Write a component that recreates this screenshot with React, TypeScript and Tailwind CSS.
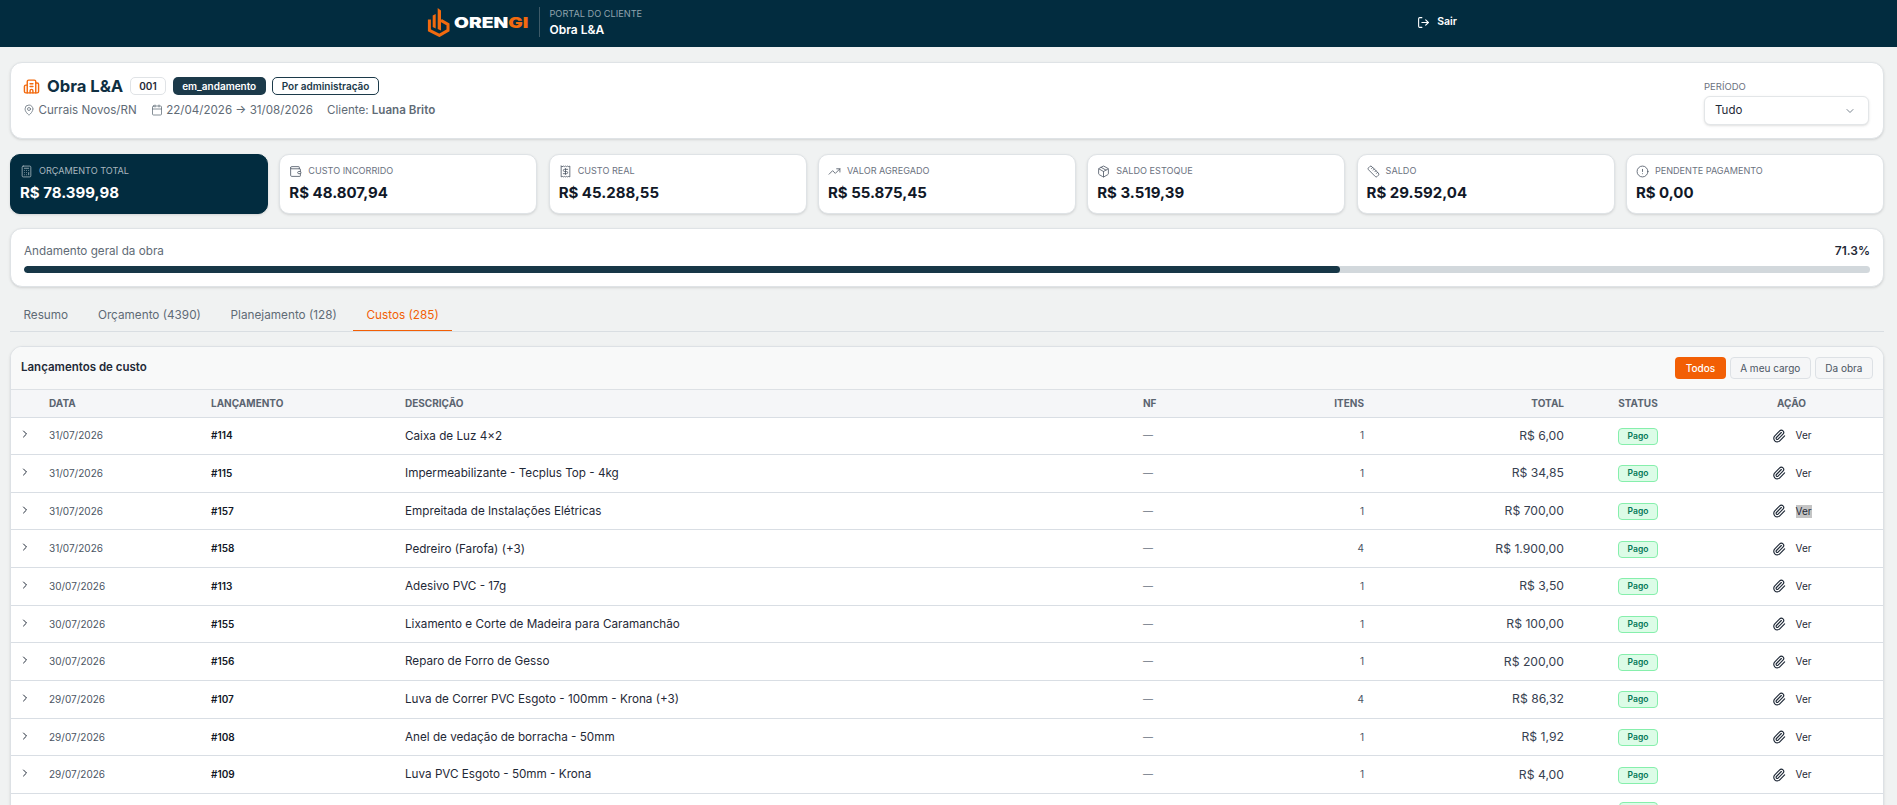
import {
  Building2,
  Calculator,
  Calendar,
  ChevronDown,
  ChevronRight,
  CircleAlert,
  LogOut,
  MapPin,
  Package,
  Paperclip,
  Receipt,
  Ruler,
  TrendingUp,
  Wallet,
} from 'lucide-react'
import type { LucideIcon } from 'lucide-react'

interface Kpi {
  label: string
  value: string
  icon: LucideIcon
  dark?: boolean
}

const KPIS: Kpi[] = [
  { label: 'Orçamento total', value: 'R$ 78.399,98', icon: Calculator, dark: true },
  { label: 'Custo incorrido', value: 'R$ 48.807,94', icon: Wallet },
  { label: 'Custo real', value: 'R$ 45.288,55', icon: Receipt },
  { label: 'Valor agregado', value: 'R$ 55.875,45', icon: TrendingUp },
  { label: 'Saldo estoque', value: 'R$ 3.519,39', icon: Package },
  { label: 'Saldo', value: 'R$ 29.592,04', icon: Ruler },
  { label: 'Pendente pagamento', value: 'R$ 0,00', icon: CircleAlert },
]

const TABS = ['Resumo', 'Orçamento (4390)', 'Planejamento (128)', 'Custos (285)']

const ROWS = [
  { date: '31/07/2026', id: '#114', desc: 'Caixa de Luz 4×2', items: 1, total: 'R$ 6,00' },
  { date: '31/07/2026', id: '#115', desc: 'Impermeabilizante - Tecplus Top - 4kg', items: 1, total: 'R$ 34,85' },
  { date: '31/07/2026', id: '#157', desc: 'Empreitada de Instalações Elétricas', items: 1, total: 'R$ 700,00' },
  { date: '31/07/2026', id: '#158', desc: 'Pedreiro (Farofa) (+3)', items: 4, total: 'R$ 1.900,00' },
  { date: '30/07/2026', id: '#113', desc: 'Adesivo PVC - 17g', items: 1, total: 'R$ 3,50' },
  { date: '30/07/2026', id: '#155', desc: 'Lixamento e Corte de Madeira para Caramanchão', items: 1, total: 'R$ 100,00' },
  { date: '30/07/2026', id: '#156', desc: 'Reparo de Forro de Gesso', items: 1, total: 'R$ 200,00' },
  { date: '29/07/2026', id: '#107', desc: 'Luva de Correr PVC Esgoto - 100mm - Krona (+3)', items: 4, total: 'R$ 86,32' },
  { date: '29/07/2026', id: '#108', desc: 'Anel de vedação de borracha - 50mm', items: 1, total: 'R$ 1,92' },
  { date: '29/07/2026', id: '#109', desc: 'Luva PVC Esgoto - 50mm - Krona', items: 1, total: 'R$ 4,00' },
]

function Logo() {
  return (
    <div className="flex items-center">
      <svg width="23" height="30" viewBox="0 0 23 30" fill="none" className="shrink-0">
        <path d="M2.4 12.5 V23.4 L12.4 28.4 L21 23.4 V17.4 L14 13.4" stroke="#f26a0f" strokeWidth="3" />
        <path d="M5.7 8.5 L8.7 7 V21.5 L5.7 20 Z" fill="#f26a0f" />
        <path d="M10.7 1 L14 3.4 V23.5 L10.7 22 Z" fill="#f26a0f" />
      </svg>
      <div className="ml-[4px] w-[76px]">
        <span className="block origin-left scale-x-[1.28] text-[15px] font-black leading-none text-white">
          OREN<span className="text-[#f26a0f]">GI</span>
        </span>
      </div>
    </div>
  )
}

function KpiCard({ label, value, icon: Icon, dark }: Kpi) {
  return (
    <div className={`h-[60px] rounded-[10px] border px-[9px] pt-[9px] shadow-sm ${dark ? 'border-[#022c3f] bg-[#022c3f]' : 'border-[#dfe3e6] bg-white'}`}>
      <div className={`flex items-center gap-[6px] text-[9.1px] uppercase leading-[14px] ${dark ? 'text-[#a9b7bf]' : 'text-[#6b7280]'}`}>
        <Icon size={13} strokeWidth={1.5} className={dark ? '' : 'text-[#4b5563]'} />
        <span>{label}</span>
      </div>
      <div className={`mt-[5px] text-[15px] font-bold leading-[20px] ${dark ? 'text-white' : 'text-[#111827]'}`}>{value}</div>
    </div>
  )
}

export default function App() {
  return (
    <div className="h-screen overflow-hidden bg-[#f0f2f2] font-['Inter',sans-serif] text-[#111827]">
      <header className="h-[47px] bg-[#022c3f] pr-[13px]">
        <div className="mx-auto flex h-full w-[1030px] items-center justify-between pb-[3px]">
          <div className="flex items-center">
            <Logo />
            <div className="ml-[9px] h-[30px] border-l border-[#3d5a68] pl-[9.5px]">
              <div className="text-[9.2px] uppercase leading-[13px] text-[#8fa3ad]">Portal do Cliente</div>
              <div className="mt-[2px] text-[12px] font-semibold leading-[15px] text-white">Obra L&amp;A</div>
            </div>
          </div>
          <div className="flex items-center gap-[7px] text-[10.5px] font-semibold text-white">
            <LogOut size={13} />
            <span>Sair</span>
          </div>
        </div>
      </header>

      <main className="pl-[10px] pr-[13px]">
        <section className="mt-[15px] flex h-[77px] justify-between rounded-xl border border-[#dfe3e6] bg-white pl-[12px] pr-[14px] shadow-sm">
          <div className="pt-[13px]">
            <div className="flex items-center">
              <Building2 size={17} strokeWidth={2} className="text-[#f26a0f]" />
              <h1 className="ml-[7px] text-[16.6px] font-bold leading-[20px] text-[#0f2f42]">Obra L&amp;A</h1>
              <span className="ml-[7px] flex h-[18.5px] items-center rounded-[5px] border border-[#e0e3e6] px-[8px] text-[10px] font-semibold text-[#1f2937]">001</span>
              <span className="ml-[7px] flex h-[18.5px] items-center rounded-[5px] bg-[#1c3a4a] px-[9.5px] text-[10px] font-semibold text-white">em_andamento</span>
              <span className="ml-[6px] flex h-[18.5px] items-center rounded-[5px] border border-[#1c3a4a] px-[9px] text-[10px] font-semibold text-[#1c3a4a]">Por administração</span>
            </div>
            <div className="mt-[5px] flex items-center text-[11.6px] leading-[18px] text-[#5f6b76]">
              <MapPin size={12} strokeWidth={1.5} />
              <span className="ml-[3.5px]">Currais Novos/RN</span>
              <Calendar size={12} strokeWidth={1.5} className="ml-[14px]" />
              <span className="ml-[3.5px]">22/04/2026 → 31/08/2026</span>
              <span className="ml-[14px]">
                Cliente: <strong className="font-semibold">Luana Brito</strong>
              </span>
            </div>
          </div>
          <div className="w-[165px] pt-[17px]">
            <div className="text-[9.5px] uppercase leading-[14px] text-[#6b7280]">Período</div>
            <div className="mt-[2px] flex h-[29px] items-center justify-between rounded-[6px] border border-[#e3e6e8] bg-white pl-[10px] pr-[12px] text-[11.5px] text-[#1f2937] shadow-sm">
              <span>Tudo</span>
              <ChevronDown size={12} className="text-[#7a8590]" />
            </div>
          </div>
        </section>

        <section className="mt-[15px] grid grid-cols-7 gap-[11.2px]">
          {KPIS.map((kpi) => (
            <KpiCard key={kpi.label} {...kpi} />
          ))}
        </section>

        <section className="mt-[14px] h-[59px] rounded-xl border border-[#dfe3e6] bg-white px-[13px] pt-[14px] shadow-sm">
          <div className="flex items-center justify-between text-[11.7px] leading-[16px]">
            <span className="text-[#5f6b76]">Andamento geral da obra</span>
            <span className="text-[12px] font-semibold text-[#1f2937]">71.3%</span>
          </div>
          <div className="mt-[7px] h-[7px] overflow-hidden rounded-full bg-[#d2d8dc]">
            <div className="h-full rounded-full bg-[#173747]" style={{ width: '71.3%' }} />
          </div>
        </section>

        <nav className="mt-[13px] flex h-[32px] gap-[3px] border-b border-[#d9dee2] text-[11.75px] text-[#5f6b76]">
          {TABS.map((tab) => {
            const active = tab.startsWith('Custos')
            return (
              <div key={tab} className={`h-[31px] px-[13.4px] pt-[6px] leading-[18px] ${active ? 'border-b border-[#f25f05] text-[#f25f05]' : ''}`}>
                {tab}
              </div>
            )
          })}
        </nav>

        <section className="mt-[14px] overflow-hidden rounded-t-xl border border-[#dde1e5] bg-white shadow-sm">
          <div className="flex h-[43px] items-center justify-between border-b border-[#dde1e5] bg-[#f8f9f9] pl-[10px] pr-[10px]">
            <h2 className="text-[11.5px] font-semibold text-[#1f2937]">Lançamentos de custo</h2>
            <div className="flex gap-[4px] text-[10px]">
              <button className="h-[21.5px] rounded-[4px] bg-[#f25f05] px-[10.5px] font-medium text-white">Todos</button>
              <button className="h-[21.5px] rounded-[4px] border border-[#dde1e5] bg-[#f5f6f7] px-[9.5px] text-[#4b5563]">A meu cargo</button>
              <button className="h-[21.5px] rounded-[4px] border border-[#dde1e5] bg-[#f5f6f7] px-[9.5px] text-[#4b5563]">Da obra</button>
            </div>
          </div>
          <table className="w-full table-fixed border-collapse text-[11px]">
            <colgroup>
              <col className="w-[26px]" />
              <col className="w-[162px]" />
              <col className="w-[194px]" />
              <col className="w-[738px]" />
              <col className="w-[119px]" />
              <col className="w-[126px]" />
              <col className="w-[200px]" />
              <col className="w-[124px]" />
              <col />
            </colgroup>
            <thead>
              <tr className="h-[27px] border-b border-[#d9dee4] bg-[#f5f6f8] text-[10px] uppercase text-[#5b6470]">
                <th />
                <th className="px-3 text-left font-bold">Data</th>
                <th className="px-3 text-left font-bold">Lançamento</th>
                <th className="px-3 text-left font-bold">Descrição</th>
                <th className="px-3 text-left font-bold">NF</th>
                <th className="px-3 text-right font-bold">Itens</th>
                <th className="px-3 text-right font-bold">Total</th>
                <th className="text-center font-bold">Status</th>
                <th className="text-center font-bold">Ação</th>
              </tr>
            </thead>
            <tbody>
              {ROWS.map((row) => (
                <tr key={row.id} className="h-[37.67px] border-b border-[#d9dee4]">
                  <td className="pl-[8px]">
                    <ChevronRight size={12} strokeWidth={2} className="-mt-[3px] text-[#1f2937]" />
                  </td>
                  <td className="px-3 text-[10px] text-[#4b5563]">{row.date}</td>
                  <td className="px-3 text-[10px] font-semibold text-[#111827]">{row.id}</td>
                  <td className="px-3 pt-[1px] text-[11.7px] text-[#1f2937]">{row.desc}</td>
                  <td className="px-3 text-[10px] text-[#6b7280]">—</td>
                  <td className="px-3 text-right text-[10px] text-[#4b5563]">{row.items}</td>
                  <td className="px-3 text-right text-[12.2px] text-[#374151]">{row.total}</td>
                  <td className="text-center">
                    <span className="inline-block rounded-[4px] border border-[#86efac] bg-[#dcfce7] px-[8.5px] text-[8.5px] font-semibold leading-[15px] text-[#047857]">Pago</span>
                  </td>
                  <td>
                    <div className="flex items-center justify-center gap-[10px] text-[10px] text-[#1f2937]">
                      <Paperclip size={14} className="text-[#1f2937]" />
                      <span className={`leading-[13px] ${row.id === '#157' ? 'bg-[#c4c4c4]' : ''}`}>Ver</span>
                    </div>
                  </td>
                </tr>
              ))}
              <tr className="h-[37.67px]">
                <td colSpan={7} />
                <td className="text-center">
                  <span className="inline-block h-[17px] w-[39px] rounded-[4px] border border-[#86efac] bg-[#dcfce7]" />
                </td>
                <td />
              </tr>
            </tbody>
          </table>
        </section>
      </main>
    </div>
  )
}
